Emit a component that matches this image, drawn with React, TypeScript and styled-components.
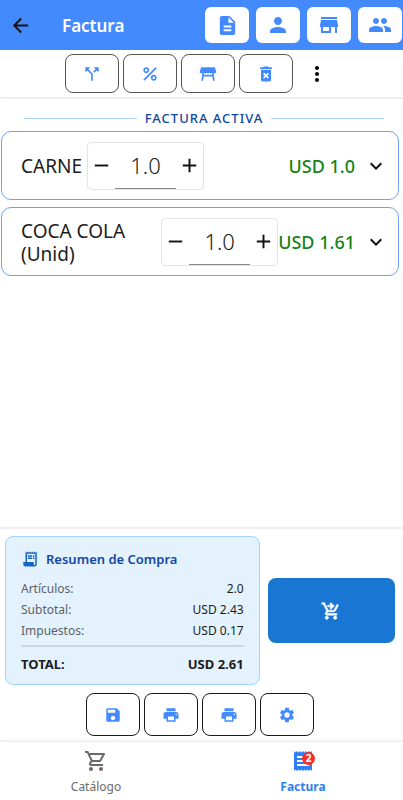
import React from "react";
import styled, { createGlobalStyle } from "styled-components";
import {
  MdArrowBack, MdDescription, MdPerson, MdStore, MdPeople, MdCallSplit, MdPercent,
  MdTableRestaurant, MdDeleteForever, MdMoreVert, MdRemove, MdAdd, MdExpandMore,
  MdReceiptLong, MdShoppingCartCheckout, MdSave, MdPrint, MdSettings,
  MdOutlineShoppingCart, MdReceipt,
} from "react-icons/md";

const GlobalStyle = createGlobalStyle`
  *, *::before, *::after { box-sizing: border-box; }
  body { margin: 0; background: #fff; color: #1c1c1c; font-family: "Noto Sans", "Open Sans", sans-serif; }
  button, input { font: inherit; color: inherit; margin: 0; padding: 0; }
  button { cursor: pointer; border: 0; background: none; display: flex; align-items: center; justify-content: center; }
  svg { display: block; flex-shrink: 0; }
`;

const Page = styled.div`
  min-height: 100vh;
  display: flex;
  flex-direction: column;
`;

const Header = styled.header`
  display: flex;
  align-items: center;
  height: 50px;
  padding: 0 1px 0 8px;
  background: #448aff;
`;

const BackButton = styled.button`
  width: 24px;
  height: 32px;
  color: #111;
`;

const Title = styled.h1`
  flex: 1;
  margin: 2px 0 0 30px;
  font-size: 17px;
  line-height: 24px;
  font-weight: 600;
  color: #fff;
`;

const HeaderActions = styled.div`
  display: flex;
  gap: 7px;
`;

const HeaderButton = styled.button`
  width: 44px;
  height: 36px;
  border-radius: 6px;
  background: #fff;
  color: #448aff;
`;

const Toolbar = styled.div`
  display: flex;
  align-items: center;
  justify-content: center;
  gap: 4px;
  height: 47px;
  padding-right: 1px;
  box-shadow: 0 1px 2px rgba(0, 0, 0, 0.14);
`;

const OutlineButton = styled.button<{ $tall?: boolean }>`
  width: 54px;
  height: ${(p) => (p.$tall ? 43 : 39)}px;
  border: 1px solid ${(p) => (p.$tall ? "#1a1a1a" : "#555")};
  border-radius: 8px;
  background: #fff;
  color: #448aff;
`;

const MoreButton = styled.button`
  width: 40px;
  height: 38px;
  color: #000;
`;

const Main = styled.main`
  flex: 1;
  padding: 12px 4px 8px 1px;
`;

const SectionTitle = styled.h2`
  display: flex;
  align-items: center;
  gap: 8px;
  margin: 0 15px 3px 23px;
  font-size: 13px;
  line-height: 19px;
  font-weight: 500;
  letter-spacing: 1px;
  color: #0d47a1;

  &::before,
  &::after {
    content: "";
    flex: 1;
    height: 1px;
    background: #a9d3fb;
  }
`;

const ItemList = styled.ul`
  display: flex;
  flex-direction: column;
  gap: 7px;
  margin: 0;
  padding: 0;
  list-style: none;
`;

const ItemCard = styled.li`
  display: flex;
  align-items: center;
  height: 69px;
  padding: 0 10px 0 19px;
  border: 1px solid #6f9ff8;
  border-radius: 10px;
`;

const ItemName = styled.span`
  margin-right: 5px;
  padding-top: 2px;
  font-size: 19px;
  line-height: 23px;
`;

const Stepper = styled.div`
  display: flex;
  align-items: center;
  flex: none;
  width: 117px;
  height: 48px;
  border: 1px solid #e4e4e4;
  border-radius: 4px;
`;

const StepButton = styled.button`
  width: 27px;
  height: 46px;
  color: #111;
`;

const Quantity = styled.input`
  flex: 1;
  min-width: 0;
  height: 46px;
  border: 0;
  border-bottom: 1px solid #8a8a8e;
  border-radius: 0;
  background: none;
  font-size: 22px;
  font-weight: 300;
  text-align: center;
  outline: 0;
`;

const Price = styled.span`
  flex: 1 0 auto;
  font-size: 18px;
  line-height: 24px;
  font-weight: 500;
  text-align: right;
  white-space: nowrap;
  color: #188218;
`;

const ExpandButton = styled.button`
  flex: none;
  width: 24px;
  height: 32px;
  margin-left: 9px;
  color: #111;
`;

const Footer = styled.footer`
  border-top: 2px solid #f0f0f0;
`;

const Checkout = styled.section`
  display: grid;
  grid-template-columns: 2fr 1fr;
  align-items: center;
  gap: 8px;
  padding: 7px 8px 8px 5px;
`;

const Summary = styled.div`
  padding: 13px 15px 9px;
  border: 1px solid #a6d3fa;
  border-radius: 8px;
  background: #e3f2fd;
`;

const SummaryTitle = styled.h3`
  display: flex;
  align-items: center;
  gap: 7px;
  margin: 0 0 10px;
  font-size: 13px;
  line-height: 18px;
  font-weight: 600;
  color: #1447a4;

  svg { color: #1565c0; }
`;

const SummaryRow = styled.div<{ $total?: boolean }>`
  display: flex;
  justify-content: space-between;
  font-size: ${(p) => (p.$total ? 13 : 12)}px;
  line-height: 21px;
  font-weight: ${(p) => (p.$total ? 700 : 400)};
  color: #1c1c1c;
`;

const SummaryLabel = styled.span<{ $total?: boolean }>`
  color: ${(p) => (p.$total ? "#1c1c1c" : "#5c6268")};
`;

const Divider = styled.hr`
  height: 2px;
  margin: 4px 0 7px;
  border: 0;
  background: #ccd5e4;
`;

const PayButton = styled.button`
  height: 65px;
  border-radius: 8px;
  background: #1976d2;
  color: #fff;

  path:not([fill="none"]) { stroke: currentColor; stroke-width: 0.7; }
  path[fill="none"] { stroke: none; }
`;

const ActionBar = styled.div`
  display: flex;
  justify-content: center;
  gap: 4px;
  padding: 0 3px 6px 0;
`;

const TabBar = styled.nav`
  display: grid;
  grid-template-columns: 1fr 1fr;
  gap: 15px;
  height: 58px;
  padding-right: 4px;
  box-shadow: 0 -1px 3px rgba(0, 0, 0, 0.12);
`;

const Tab = styled.a<{ $active?: boolean }>`
  display: flex;
  flex-direction: column;
  align-items: center;
  gap: 5px;
  padding-top: 7px;
  font-size: 12px;
  line-height: 18px;
  font-weight: ${(p) => (p.$active ? 700 : 400)};
  color: ${(p) => (p.$active ? "#2f80f5" : "#6b6b6b")};
  text-decoration: none;
`;

const TabIcon = styled.span`
  position: relative;
`;

const Badge = styled.span`
  position: absolute;
  top: 3px;
  right: 0;
  width: 13px;
  height: 13px;
  border-radius: 50%;
  background: #f0322c;
  color: #fff;
  font-size: 10px;
  line-height: 13px;
  font-weight: 700;
  text-align: center;
`;

const items = [
  { name: "CARNE", qty: "1.0", price: "USD 1.0" },
  { name: "COCA COLA (Unid)", qty: "1.0", price: "USD 1.61" },
];

const totals = [
  ["Artículos:", "2.0"],
  ["Subtotal:", "USD 2.43"],
  ["Impuestos:", "USD 0.17"],
];

export default function App() {
  return (
    <Page>
      <GlobalStyle />
      <Header>
        <BackButton aria-label="Volver"><MdArrowBack size={23} /></BackButton>
        <Title>Factura</Title>
        <HeaderActions>
          <HeaderButton aria-label="Documento"><MdDescription size={23} /></HeaderButton>
          <HeaderButton aria-label="Cliente"><MdPerson size={24} /></HeaderButton>
          <HeaderButton aria-label="Tienda"><MdStore size={24} /></HeaderButton>
          <HeaderButton aria-label="Usuarios"><MdPeople size={24} /></HeaderButton>
        </HeaderActions>
      </Header>
      <Toolbar>
        <OutlineButton aria-label="Dividir"><MdCallSplit size={20} /></OutlineButton>
        <OutlineButton aria-label="Descuento"><MdPercent size={20} /></OutlineButton>
        <OutlineButton aria-label="Mesa"><MdTableRestaurant size={20} /></OutlineButton>
        <OutlineButton aria-label="Eliminar"><MdDeleteForever size={20} /></OutlineButton>
        <MoreButton aria-label="Más opciones"><MdMoreVert size={24} /></MoreButton>
      </Toolbar>
      <Main>
        <SectionTitle>FACTURA ACTIVA</SectionTitle>
        <ItemList>
          {items.map((item) => (
            <ItemCard key={item.name}>
              <ItemName>{item.name}</ItemName>
              <Stepper>
                <StepButton aria-label="Restar"><MdRemove size={23} /></StepButton>
                <Quantity aria-label={`Cantidad de ${item.name}`} defaultValue={item.qty} />
                <StepButton aria-label="Sumar"><MdAdd size={23} /></StepButton>
              </Stepper>
              <Price>{item.price}</Price>
              <ExpandButton aria-label="Ver detalles"><MdExpandMore size={24} /></ExpandButton>
            </ItemCard>
          ))}
        </ItemList>
      </Main>
      <Footer>
        <Checkout>
          <Summary>
            <SummaryTitle><MdReceiptLong size={18} />Resumen de Compra</SummaryTitle>
            {totals.map(([label, value]) => (
              <SummaryRow key={label}>
                <SummaryLabel>{label}</SummaryLabel>
                <span>{value}</span>
              </SummaryRow>
            ))}
            <Divider />
            <SummaryRow $total>
              <SummaryLabel $total>TOTAL:</SummaryLabel>
              <span>USD 2.61</span>
            </SummaryRow>
          </Summary>
          <PayButton aria-label="Pagar"><MdShoppingCartCheckout size={20} /></PayButton>
        </Checkout>
        <ActionBar>
          <OutlineButton $tall aria-label="Guardar"><MdSave size={18} /></OutlineButton>
          <OutlineButton $tall aria-label="Imprimir"><MdPrint size={18} /></OutlineButton>
          <OutlineButton $tall aria-label="Imprimir copia"><MdPrint size={18} /></OutlineButton>
          <OutlineButton $tall aria-label="Ajustes"><MdSettings size={18} /></OutlineButton>
        </ActionBar>
        <TabBar>
          <Tab href="#catalogo">
            <TabIcon><MdOutlineShoppingCart size={24} /></TabIcon>
            Catálogo
          </Tab>
          <Tab href="#factura" $active>
            <TabIcon><MdReceipt size={24} /><Badge>2</Badge></TabIcon>
            Factura
          </Tab>
        </TabBar>
      </Footer>
    </Page>
  );
}
